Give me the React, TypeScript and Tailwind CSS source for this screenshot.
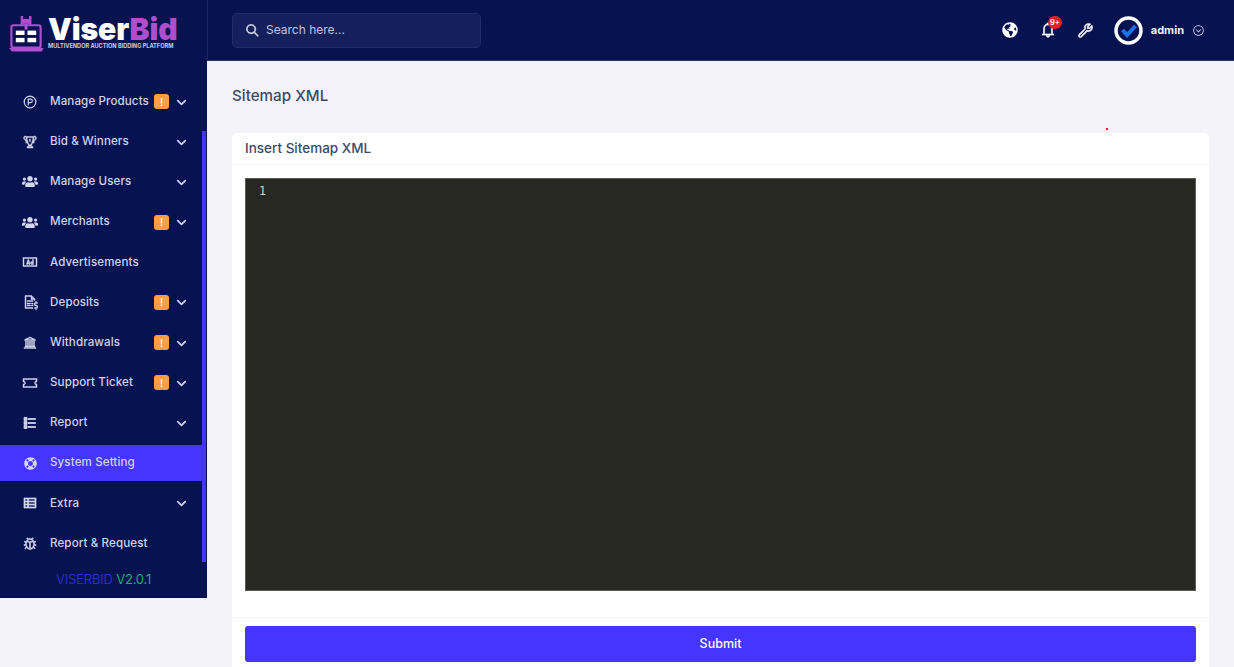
import type { ComponentType } from "react";
import { FaGlobeAmericas, FaLifeRing, FaUsers } from "react-icons/fa";
import {
  LiaAdSolid,
  LiaBellSolid,
  LiaBugSolid,
  LiaChevronCircleDownSolid,
  LiaFileInvoiceDollarSolid,
  LiaListSolid,
  LiaSearchSolid,
  LiaThListSolid,
  LiaTicketAltSolid,
  LiaTrophySolid,
  LiaUniversitySolid,
  LiaWrenchSolid,
} from "react-icons/lia";
import { LuChevronDown, LuCircleParking } from "react-icons/lu";

type NavItem = {
  label: string;
  icon: ComponentType<{ className?: string }>;
  iconClass: string;
  alert?: boolean;
  caret?: boolean;
  active?: boolean;
};

const lineIcon = "h-[16px] w-[16px] stroke-[0.9]";

const navItems: NavItem[] = [
  { label: "Manage Products", icon: LuCircleParking, iconClass: "h-[14px] w-[14px] mx-[1px]", alert: true, caret: true },
  { label: "Bid & Winners", icon: LiaTrophySolid, iconClass: lineIcon, caret: true },
  { label: "Manage Users", icon: FaUsers, iconClass: "h-[15px] w-[16px]", caret: true },
  { label: "Merchants", icon: FaUsers, iconClass: "h-[15px] w-[16px]", alert: true, caret: true },
  { label: "Advertisements", icon: LiaAdSolid, iconClass: lineIcon },
  { label: "Deposits", icon: LiaFileInvoiceDollarSolid, iconClass: lineIcon, alert: true, caret: true },
  { label: "Withdrawals", icon: LiaUniversitySolid, iconClass: lineIcon, alert: true, caret: true },
  { label: "Support Ticket", icon: LiaTicketAltSolid, iconClass: lineIcon, alert: true, caret: true },
  { label: "Report", icon: LiaListSolid, iconClass: "h-[16px] w-[16px] stroke-[1.6]", caret: true },
  { label: "System Setting", icon: FaLifeRing, iconClass: "h-[13px] w-[13px] mx-[1.5px]", active: true },
  { label: "Extra", icon: LiaThListSolid, iconClass: "h-[16px] w-[16px] stroke-[1.4]", caret: true },
  { label: "Report & Request", icon: LiaBugSolid, iconClass: "h-[16px] w-[16px] stroke-[1.2]" },
];

function LogoMark() {
  return (
    <svg width="35" height="37" viewBox="0 0 36 38" className="shrink-0">
      <path d="M0 33h35.500l-1.600 3.500H3z" fill="#b04ed0" />
      <rect x="2.500" y="9.500" width="30" height="23" rx="2" fill="none" stroke="#b04ed0" strokeWidth="2.200" />
      <rect x="12" y="0" width="2.600" height="9" fill="#b04ed0" />
      <rect x="20.500" y="0" width="2.600" height="9" fill="#b04ed0" />
      <rect x="14" y="3" width="7" height="5" fill="#b04ed0" />
      <rect x="16" y="8" width="3" height="6" fill="#b04ed0" />
      <rect x="7" y="15" width="9" height="4.500" fill="#fff" />
      <rect x="19" y="15" width="9" height="4.500" fill="#fff" />
      <rect x="7" y="22.500" width="9" height="4.500" fill="#fff" />
      <rect x="19" y="22.500" width="9" height="4.500" fill="#fff" />
    </svg>
  );
}

function SideRow({ item }: { item: NavItem }) {
  const Icon = item.icon;
  return (
    <div
      className={`flex h-9 items-center pl-[22px] pr-[17px] ${
        item.active ? "bg-[#4634ff]" : ""
      }`}
    >
      <Icon className={`shrink-0 text-[#d3d7ee] ${item.iconClass}`} />
      <span className="ml-[12px] whitespace-nowrap text-[11.6px] font-medium tracking-[0.1px] text-[#cfd3ec]">
        {item.label}
      </span>
      <span className="ml-auto flex items-center">
        {item.alert && (
          <span className="flex h-[15px] w-[15px] items-center justify-center rounded-[3px] bg-[#ff9f43] text-[10px] font-medium leading-none text-white">
            !
          </span>
        )}
        {item.caret && <LuChevronDown className="ml-[5px] mt-[1px] h-[15px] w-[15px] text-[#d3d7ee]" strokeWidth={2.6} />}
      </span>
    </div>
  );
}

function Sidebar() {
  return (
    <aside className="relative flex h-[598px] w-[207px] shrink-0 flex-col bg-[#071251]">
      <div className="flex h-[61px] shrink-0 items-center gap-[4px] pl-[9px] pt-[8px]">
        <LogoMark />
        <div className="-mt-[2px] flex flex-col gap-[2px]">
          <div className="text-[30px] font-black leading-[24px] tracking-[-0.1px] text-white">
            Viser<span className="text-[#b04ed0]">Bid</span>
          </div>
          <div className="whitespace-nowrap text-[5.6px] font-bold leading-[7px] text-[#c9cde6]">
            MULTIVENDOR AUCTION BIDDING PLATFORM
          </div>
        </div>
      </div>
      <nav className="mt-[22.5px] flex flex-col gap-[4.2px] pr-[1px]">
        {navItems.map((item) => (
          <SideRow key={item.label} item={item} />
        ))}
      </nav>
      <div className="mt-[7.5px] text-center text-[13px] leading-[20px] tracking-[-0.2px]">
        <span className="text-[#2f2bc9]">VISERBID</span> <span className="text-[#1fae6a]">V2.0.1</span>
      </div>
      <div className="absolute left-[202px] top-[131px] h-[431px] w-[4px] bg-[#4634ff]" />
    </aside>
  );
}

function TopBar() {
  return (
    <header className="flex h-[61px] shrink-0 items-center border-b border-l border-b-[#2c3566] border-l-[#1d2762] bg-[#071251] pl-[24px] pr-[29px]">
      <div className="flex h-[35px] w-[249px] items-center rounded-[5px] border border-[#232d6b] bg-[#141f5c] pl-[12px]">
        <LiaSearchSolid className="h-[15px] w-[15px] -scale-x-100 stroke-[1.2] text-[#e3e5f3]" />
        <span className="ml-[6px] text-[12px] text-[#bfc3e0]">Search here...</span>
      </div>
      <div className="ml-auto flex items-center">
        <FaGlobeAmericas className="h-[16px] w-[16px] text-white" />
        <span className="relative ml-[21px] flex">
          <LiaBellSolid className="h-[18px] w-[18px] stroke-[1] text-white" />
          <span className="absolute -right-[5px] -top-[5px] flex h-[13px] w-[14px] items-center justify-center rounded-full bg-[#ea1f27] text-[7.5px] font-semibold text-white">
            9+
          </span>
        </span>
        <LiaWrenchSolid className="ml-[19px] h-[19px] w-[19px] stroke-[0.8] text-white" />
        <svg width="29" height="29" viewBox="0 0 29 29" className="ml-[19px]">
          <circle cx="14.500" cy="14.500" r="12.500" fill="#071251" stroke="#fff" strokeWidth="3.500" />
          <path d="M8.500 14l4.500 5 8.500-9" fill="none" stroke="#1a73e8" strokeWidth="4" />
        </svg>
        <span className="ml-[8px] text-[11px] font-bold text-[#eef0fa]">admin</span>
        <LiaChevronCircleDownSolid className="ml-[8px] h-[13px] w-[13px] text-[#cfd3ec]" />
      </div>
    </header>
  );
}

export default function App() {
  return (
    <div className="relative flex h-[667px] overflow-hidden bg-[#f3f3f9] font-['Inter','Liberation_Sans',sans-serif]">
      <Sidebar />
      <div className="flex min-w-0 flex-1 flex-col">
        <TopBar />
        <main className="shrink-0 px-[25px] pt-[25px]">
          <h1 className="text-[15.200px] font-medium leading-[20px] text-[#3d4a68]">Sitemap XML</h1>
          <section className="mt-[27px] rounded-[5px] bg-white">
            <div className="flex h-[32px] items-center border-b border-[#f3f3f6] px-[13px]">
              <h2 className="text-[13.500px] font-medium text-[#3d4a68]">Insert Sitemap XML</h2>
            </div>
            <div className="border-b border-[#f3f3f6] px-[13px] pb-[26px] pt-[13px]">
              <div className="h-[413px] border border-[#5c5c54] bg-[#272822] pl-[13px] pt-[4px] font-['DejaVu_Sans_Mono',monospace] text-[11.500px] leading-[16px] text-[#d4d4cc]">
                1
              </div>
            </div>
            <div className="px-[13px] pb-[13px] pt-[8px]">
              <button className="flex h-[36px] w-full items-center justify-center rounded-[3px] bg-[#4634ff] text-[12.500px] font-medium text-white">
                Submit
              </button>
            </div>
          </section>
        </main>
      </div>
      <div className="absolute left-[1106px] top-[128px] h-[2px] w-[2px] bg-[#ea1f27]" />
    </div>
  );
}
